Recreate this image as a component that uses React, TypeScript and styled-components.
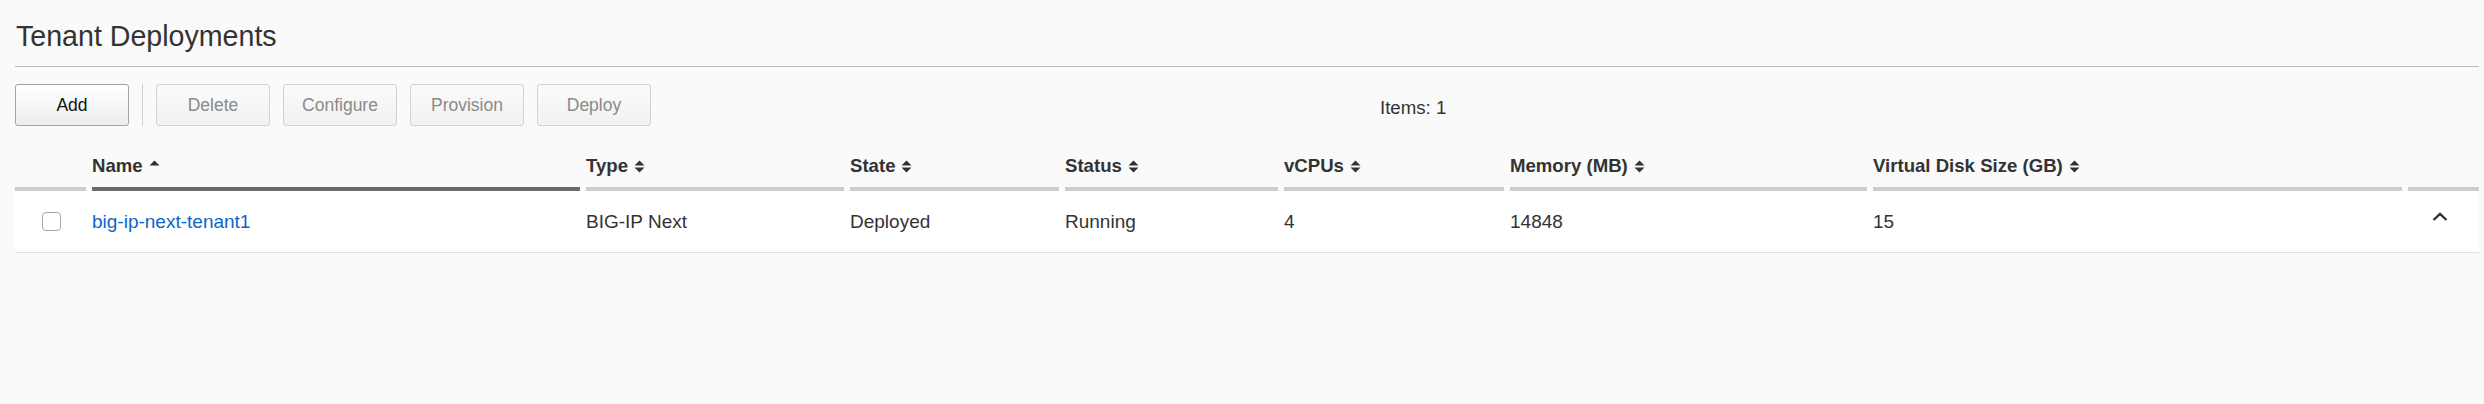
import React from "react";
import styled, { createGlobalStyle } from "styled-components";

const GlobalStyle = createGlobalStyle`
  html, body {
    margin: 0;
    padding: 0;
    background: #fafafa;
  }
  body {
    font-family: "Liberation Sans", Arial, Helvetica, sans-serif;
    color: #333;
  }
`;

const Page = styled.div`
  padding: 0 5px 0 15px;
  min-height: 404px;
  box-sizing: border-box;
`;

const Title = styled.h1`
  margin: 0;
  padding: 20px 0 14px 1px;
  font-size: 28.6px;
  line-height: 32px;
  font-weight: 400;
  color: #333;
  border-bottom: 1px solid #bbb;
`;

const Toolbar = styled.div`
  display: flex;
  align-items: center;
  margin-top: 17px;
  height: 42px;
`;

const Button = styled.button<{ $primary?: boolean }>`
  box-sizing: border-box;
  width: 114px;
  height: 42px;
  margin-right: 13px;
  border-radius: 3px;
  font-family: inherit;
  font-size: 17.5px;
  border: 1px solid ${(p) => (p.$primary ? "#a3a3a3" : "#d2d2d2")};
  color: ${(p) => (p.$primary ? "#111" : "#8a8a8a")};
  background: ${(p) =>
    p.$primary
      ? "linear-gradient(#ffffff, #ededed)"
      : "linear-gradient(#fbfbfb, #f1f1f1)"};
  cursor: ${(p) => (p.$primary ? "pointer" : "default")};
`;

const Separator = styled.span`
  width: 1px;
  height: 42px;
  background: #cfcfcf;
  margin: 0 13px 0 0;
`;

const ItemCount = styled.span`
  margin-left: 716px;
  margin-top: 6px;
  font-size: 18.67px;
  color: #333;
`;

const Grid = styled.div<{ $cols: string }>`
  display: grid;
  grid-template-columns: ${(p) => p.$cols};
  column-gap: 6px;
`;

const HeaderRow = styled(Grid)`
  margin-top: 19px;
`;

const HeaderCell = styled.div<{ $active?: boolean }>`
  display: flex;
  align-items: center;
  gap: 6px;
  padding: 10px 0;
  line-height: 22px;
  font-size: 18.6px;
  font-weight: 700;
  color: #333;
  white-space: nowrap;
  border-bottom: 4px solid ${(p) => (p.$active ? "#696969" : "#cdcdcd")};
`;

const DataRow = styled(Grid)`
  background: #fff;
  border-bottom: 1px solid #dedede;
  height: 62px;
  box-sizing: border-box;
`;

const Cell = styled.div`
  display: flex;
  align-items: center;
  font-size: 19px;
  color: #333;
  white-space: nowrap;
`;

const CheckCell = styled(Cell)`
  justify-content: center;
  padding-left: 2px;
`;

const ExpandCell = styled(Cell)`
  padding-left: 24px;
`;

const CheckBox = styled.span`
  width: 19px;
  height: 19px;
  box-sizing: border-box;
  border: 1px solid #a8a8a8;
  border-radius: 4px;
  background: #fff;
`;

const NameLink = styled.a`
  color: #0a66c9;
  text-decoration: none;
  font-size: 19px;
`;

const Chevron = styled.svg`
  margin-bottom: 10px;
`;

const SortIcon = ({ dir }: { dir?: "asc" }) => (
  <svg width="11" height="13" viewBox="0 0 11 13" aria-hidden>
    <polygon points="0.5,5.5 5.5,0.5 10.5,5.5" fill="#333" />
    {dir !== "asc" && <polygon points="0.5,7.5 5.5,12.5 10.5,7.5" fill="#333" />}
  </svg>
);

type Column = { key: string; label: string; width: number; sort?: "asc" | "both" };

const columns: Column[] = [
  { key: "check", label: "", width: 71 },
  { key: "name", label: "Name", width: 488, sort: "asc" },
  { key: "type", label: "Type", width: 258, sort: "both" },
  { key: "state", label: "State", width: 209, sort: "both" },
  { key: "status", label: "Status", width: 213, sort: "both" },
  { key: "vcpus", label: "vCPUs", width: 220, sort: "both" },
  { key: "memory", label: "Memory (MB)", width: 357, sort: "both" },
  { key: "disk", label: "Virtual Disk Size (GB)", width: 529, sort: "both" },
  { key: "expand", label: "", width: 71 },
];

const cols = columns.map((c) => `${c.width}px`).join(" ");

const rows = [
  {
    name: "big-ip-next-tenant1",
    type: "BIG-IP Next",
    state: "Deployed",
    status: "Running",
    vcpus: "4",
    memory: "14848",
    disk: "15",
  },
];

export default function App() {
  return (
    <>
      <GlobalStyle />
      <Page>
        <Title>Tenant Deployments</Title>
        <Toolbar>
          <Button $primary>Add</Button>
          <Separator />
          <Button disabled>Delete</Button>
          <Button disabled>Configure</Button>
          <Button disabled>Provision</Button>
          <Button disabled>Deploy</Button>
          <ItemCount>Items: 1</ItemCount>
        </Toolbar>
        <HeaderRow $cols={cols}>
          {columns.map((c) => (
            <HeaderCell key={c.key} $active={c.sort === "asc"}>
              {c.label}
              {c.sort && <SortIcon dir={c.sort === "asc" ? "asc" : undefined} />}
            </HeaderCell>
          ))}
        </HeaderRow>
        {rows.map((r) => (
          <DataRow $cols={cols} key={r.name}>
            <CheckCell>
              <CheckBox />
            </CheckCell>
            <Cell>
              <NameLink href="#">{r.name}</NameLink>
            </Cell>
            <Cell>{r.type}</Cell>
            <Cell>{r.state}</Cell>
            <Cell>{r.status}</Cell>
            <Cell>{r.vcpus}</Cell>
            <Cell>{r.memory}</Cell>
            <Cell>{r.disk}</Cell>
            <ExpandCell>
              <Chevron width="16" height="9" viewBox="0 0 16 9" aria-hidden>
                <polyline
                  points="1.5,8 8,1.8 14.5,8"
                  fill="none"
                  stroke="#333"
                  strokeWidth="2.4"
                />
              </Chevron>
            </ExpandCell>
          </DataRow>
        ))}
      </Page>
    </>
  );
}
